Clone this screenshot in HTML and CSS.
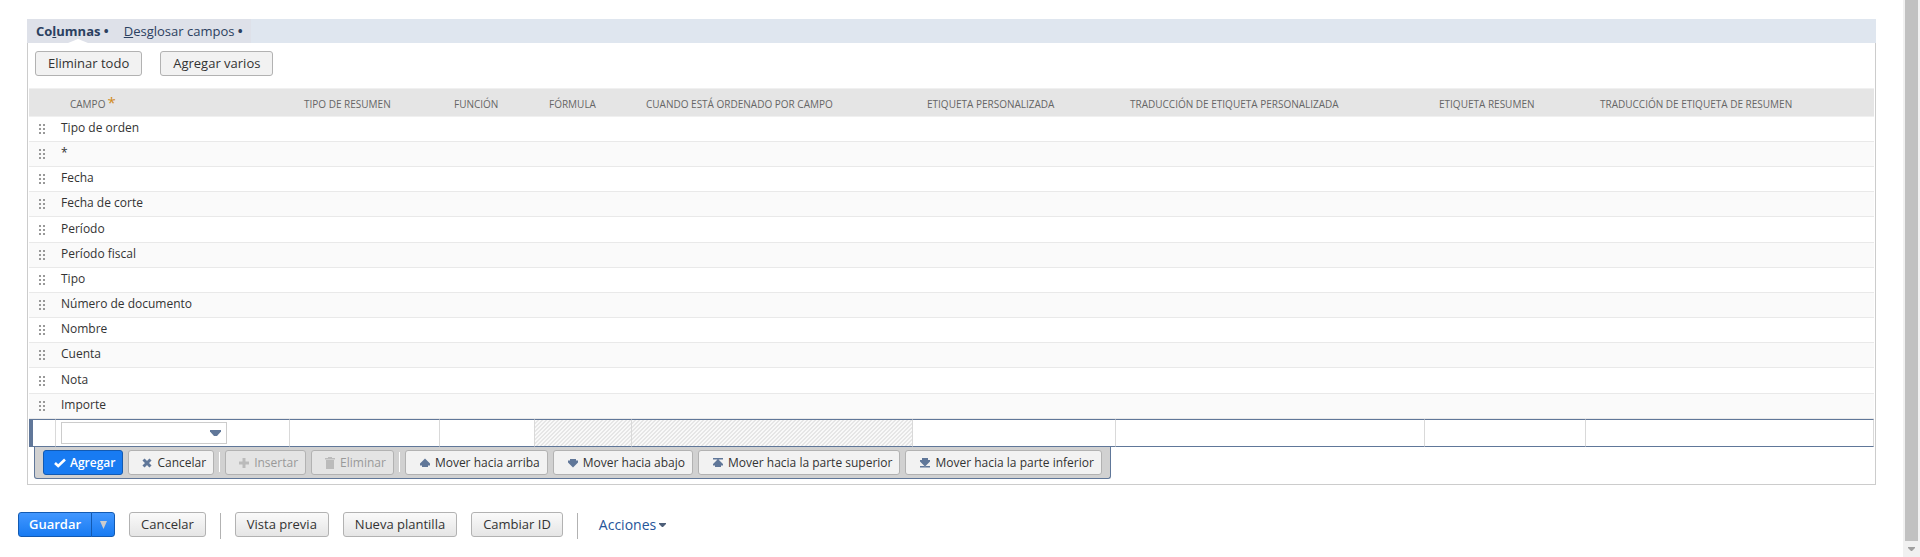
FILE: index.html
```html
<!DOCTYPE html>
<html lang="es">
<head>
<meta charset="utf-8">
<title>Columnas</title>
<link rel="stylesheet" href="styles.css">
</head>
<body>
<svg class="defs" aria-hidden="true">
  <symbol id="grip" viewBox="0 0 6 10"><path d="M0 0h2v2H0zM4 0h2v2H4zM0 4h2v2H0zM4 4h2v2H4zM0 8h2v2H0zM4 8h2v2H4z"/></symbol>
  <symbol id="check" viewBox="0 0 12 12"><path d="M1 6l3.200 3L11 2.500" fill="none" stroke="currentColor" stroke-width="2.600"/></symbol>
  <symbol id="cross" viewBox="0 0 12 12"><path d="M2.500 2.500l7 7M9.500 2.500l-7 7" fill="none" stroke="currentColor" stroke-width="3"/></symbol>
  <symbol id="plus" viewBox="0 0 12 12"><path d="M6 1v10M1 6h10" fill="none" stroke="currentColor" stroke-width="3"/></symbol>
  <symbol id="trash" viewBox="0 0 12 12"><path d="M1 1h3V0h4v1h3v1.500H1zM2 3h8v9H2z"/></symbol>
  <symbol id="up" viewBox="0 0 12 12"><path d="M6 1.500l5 5v2H9v1.500H3V8.500H1v-2z"/></symbol>
  <symbol id="down" viewBox="0 0 12 12"><path d="M6 10.500l5-5v-2H9V2H3v1.500H1v2z"/></symbol>
  <symbol id="top" viewBox="0 0 12 12"><path d="M1 1h10v1.500H1zM6 2l5 5v1.500H9V10H3V8.500H1V7z"/></symbol>
  <symbol id="bottom" viewBox="0 0 12 12"><path d="M1 9h10v1.500H1zM6 9.500l5-5V3H9V1H3v2H1v1.500z"/></symbol>
</svg>
<div class="page">
<main class="main">
  <section class="panel">
    <nav class="tabs">
      <a class="tab tab-active" href="#columnas">Co<u>l</u>umnas •</a>
      <a class="tab" href="#desglosar"><u>D</u>esglosar campos <b>•</b></a>
    </nav>
    <div class="panel-body">
      <div class="panel-actions">
        <button class="btn btn-flat" type="button">Eliminar todo</button>
        <button class="btn btn-flat" type="button">Agregar varios</button>
      </div>
      <table class="grid">
        <colgroup><col class="c-grip"><col class="c-campo"><col class="c-tipo"><col class="c-funcion"><col class="c-formula"><col class="c-orden"><col class="c-etiqueta"><col class="c-trad"><col class="c-resumen"><col></colgroup>
        <thead>
          <tr><th></th><th>Campo<span class="required">*</span></th><th>Tipo de resumen</th><th>Función</th><th>Fórmula</th><th>Cuando está ordenado por campo</th><th>Etiqueta personalizada</th><th>Traducción de etiqueta personalizada</th><th>Etiqueta resumen</th><th>Traducción de etiqueta de resumen</th></tr>
        </thead>
        <tbody>
          <tr><td><svg class="grip"><use href="#grip"/></svg></td><td colspan="9">Tipo de orden</td></tr>
          <tr><td><svg class="grip"><use href="#grip"/></svg></td><td colspan="9">*</td></tr>
          <tr><td><svg class="grip"><use href="#grip"/></svg></td><td colspan="9">Fecha</td></tr>
          <tr><td><svg class="grip"><use href="#grip"/></svg></td><td colspan="9">Fecha de corte</td></tr>
          <tr><td><svg class="grip"><use href="#grip"/></svg></td><td colspan="9">Período</td></tr>
          <tr><td><svg class="grip"><use href="#grip"/></svg></td><td colspan="9">Período fiscal</td></tr>
          <tr><td><svg class="grip"><use href="#grip"/></svg></td><td colspan="9">Tipo</td></tr>
          <tr><td><svg class="grip"><use href="#grip"/></svg></td><td colspan="9">Número de documento</td></tr>
          <tr><td><svg class="grip"><use href="#grip"/></svg></td><td colspan="9">Nombre</td></tr>
          <tr><td><svg class="grip"><use href="#grip"/></svg></td><td colspan="9">Cuenta</td></tr>
          <tr><td><svg class="grip"><use href="#grip"/></svg></td><td colspan="9">Nota</td></tr>
          <tr><td><svg class="grip"><use href="#grip"/></svg></td><td colspan="9">Importe</td></tr>
        </tbody>
        <tfoot>
          <tr><td class="marker"></td><td><div class="combo"><input class="combo-input" type="text" aria-label="Campo"><svg class="combo-arrow" viewBox="0 0 11 6"><path d="M0 0h11v1.500L7 6H4L0 1.500z"/></svg></div></td><td></td><td></td><td class="disabled"></td><td class="disabled"></td><td></td><td></td><td></td><td></td></tr>
        </tfoot>
      </table>
      <div class="toolbar">
        <button class="tool tool-primary" type="button"><svg class="icon"><use href="#check"/></svg>Agregar</button>
        <button class="tool" type="button"><svg class="icon"><use href="#cross"/></svg>Cancelar</button>
        <span class="tool-sep"></span>
        <button class="tool" type="button" disabled><svg class="icon"><use href="#plus"/></svg>Insertar</button>
        <button class="tool" type="button" disabled><svg class="icon"><use href="#trash"/></svg>Eliminar</button>
        <span class="tool-sep"></span>
        <button class="tool tool-move" type="button"><svg class="icon"><use href="#up"/></svg>Mover hacia arriba</button>
        <button class="tool tool-move" type="button"><svg class="icon"><use href="#down"/></svg>Mover hacia abajo</button>
        <button class="tool tool-move" type="button"><svg class="icon"><use href="#top"/></svg>Mover hacia la parte superior</button>
        <button class="tool tool-move" type="button"><svg class="icon"><use href="#bottom"/></svg>Mover hacia la parte inferior</button>
      </div>
    </div>
  </section>
  <footer class="footer">
    <div class="split">
      <button class="btn btn-save" type="button">Guardar</button>
      <button class="btn btn-save-menu" type="button" aria-label="Más opciones de guardar"><svg class="save-arrow" viewBox="0 0 7 8"><path d="M0 0h7L3.500 8z"/></svg></button>
    </div>
    <button class="btn" type="button">Cancelar</button>
    <span class="footer-sep"></span>
    <button class="btn" type="button">Vista previa</button>
    <button class="btn" type="button">Nueva plantilla</button>
    <button class="btn" type="button">Cambiar ID</button>
    <span class="footer-sep"></span>
    <a class="actions" href="#acciones">Acciones<svg class="actions-arrow" viewBox="0 0 7 4"><path d="M0 0h7v1L4 4H3L0 1z"/></svg></a>
  </footer>
</main>
<div class="scrollbar"><div class="thumb"></div><svg class="scroll-arrow" viewBox="0 0 7 4"><path d="M0 0h7v1L4 4H3L0 1z"/></svg></div>
</div>
</body>
</html>
```
FILE: styles.css
```css
* { box-sizing: border-box; }
body { margin: 0; background: #fff; color: #333; font-family: "Open Sans", "Noto Sans", sans-serif; font-size: 12px; }
button { font-family: inherit; }
.defs { display: none; }
.page { display: flex; min-height: 100vh; }
.main { flex: 1; min-width: 0; padding: 19px 27px 0 18px; }
.panel { margin-left: 9px; }
.tabs { display: flex; height: 24px; background: #dfe6ef; }
.tab { display: block; position: relative; padding: 0 8px 0 15px; background: #dee1e9; color: #2b4060; font-size: 13px; line-height: 25px; text-decoration: none; }
.tab-active { padding: 0 0 0 9px; font-weight: 700; }
.tab-active::after { content: ""; position: absolute; left: 50%; bottom: 0; border: solid transparent; border-width: 0 10px 4px; border-bottom-color: #fff; }
.panel-body { border: 1px solid #ccc; border-top: 0; padding: 8px 1px 5px; }
.panel-actions { display: flex; gap: 18px; padding: 0 0 12px 6px; }
.btn { height: 25px; padding: 0 11px; border: 1px solid #b2b2b2; border-radius: 3px; background: linear-gradient(#fafafa, #e5e5e5); color: #333; font-size: 13px; font-weight: 500; line-height: 23px; }
.btn-flat { padding: 0 12px; background: #f2f2f2; }

.grid { width: 100%; border-collapse: separate; border-spacing: 0; table-layout: fixed; }
.c-grip { width: 27px; }
.c-campo { width: 234px; }
.c-tipo { width: 150px; }
.c-funcion { width: 95px; }
.c-formula { width: 97px; }
.c-orden { width: 281px; }
.c-etiqueta { width: 203px; }
.c-trad { width: 309px; }
.c-resumen { width: 161px; }
.grid th { height: 29px; padding: 2px 0 0 14px; border: solid #f0f0f0; border-width: 1px 0; background: #e5e5e5; color: #666; font-size: 10px; font-weight: 400; line-height: 14px; text-align: left; text-transform: uppercase; white-space: nowrap; }
.required { margin-left: 2px; color: #d18b22; font-size: 15px; line-height: 10px; }
.grid tbody td { height: 25px; padding: 0 5px 3px; border-bottom: 1px solid #e9e9e9; line-height: 21px; }
.grid tbody tr:nth-child(6n+5) td { height: 26px; }
.grid tbody td:first-child { padding: 0 0 0 10px; line-height: 10px; }
.grid tbody tr:nth-child(even) { background: #fafafa; }
.grip { display: block; width: 6px; height: 10px; fill: #999; }
.grid tfoot td { height: 28px; padding: 0 5px; border: solid #607799; border-width: 1px 0; border-right: 1px solid #d9d9d9; }
.grid tfoot .marker { border-left: 4px solid #607799; }
.grid tfoot .disabled { background: linear-gradient(135deg, #f9f9f9 25%, #e6e6e6 25% 50%, #f9f9f9 50% 75%, #e6e6e6 75%) 0 0 / 4px 4px; }
.combo { position: relative; width: 166px; height: 22px; }
.combo-input { width: 100%; height: 100%; padding: 0 20px 0 4px; border: 1px solid #ccc; font: inherit; background: #fff; }
.combo-arrow { position: absolute; right: 6px; top: 8px; width: 11px; height: 6px; fill: #607799; }
.toolbar { display: flex; width: max-content; height: 32px; margin-left: 5px; padding: 3px 8px 0; gap: 5px; border: 1px solid #607799; border-top: 0; border-radius: 0 0 3px 3px; background: #d1d1d1; }
.tool { display: flex; align-items: center; gap: 4px; height: 25px; padding: 0 7px 0 12px; border: 1px solid #b2b2b2; border-radius: 3px; background: #f2f2f2; color: #333; font-size: 12px; font-weight: 500; line-height: 23px; }
.tool:disabled { background: #e4e4e4; color: #999; }
.tool-primary { padding-left: 10px; border-color: #125ab2; background: #187bf2; color: #fff; font-weight: 600; }
.tool-move { padding-left: 13px; }
.icon { width: 12px; height: 12px; fill: currentColor; color: #607799; }
.tool-primary .icon { color: #fff; }
.tool:disabled .icon { color: #bbb; }
.tool-sep { width: 1px; height: 20px; margin-top: 2px; background: #fff; }

.footer { display: flex; align-items: flex-start; gap: 14px; padding-top: 27px; }
.split { display: flex; }
.btn-save, .btn-save-menu { border-color: #125ab2; background: linear-gradient(#4297ff, #187bf2); color: #fff; font-weight: 600; }
.btn-save { padding: 0 10px; border-radius: 3px 0 0 3px; }
.btn-save-menu { width: 24px; margin-left: -1px; padding: 0 8px; border-radius: 0 3px 3px 0; }
.save-arrow { display: block; width: 7px; height: 8px; fill: #ccc; }
.footer-sep { width: 1px; height: 26px; margin-top: 1px; background: #b2b2b2; }
.actions { display: flex; align-items: center; gap: 3px; padding-left: 7px; color: #255599; font-size: 14px; line-height: 25px; text-decoration: none; }
.actions-arrow { width: 7px; height: 4px; fill: #4d5f79; }
.scrollbar { display: flex; flex-direction: column; align-items: center; width: 17px; background: #f1f1f1; }
.thumb { flex: 1; width: 13px; background: #c1c1c1; }
.scroll-arrow { width: 7px; height: 4px; margin: 6px 0; fill: #a0a0a0; }
```
